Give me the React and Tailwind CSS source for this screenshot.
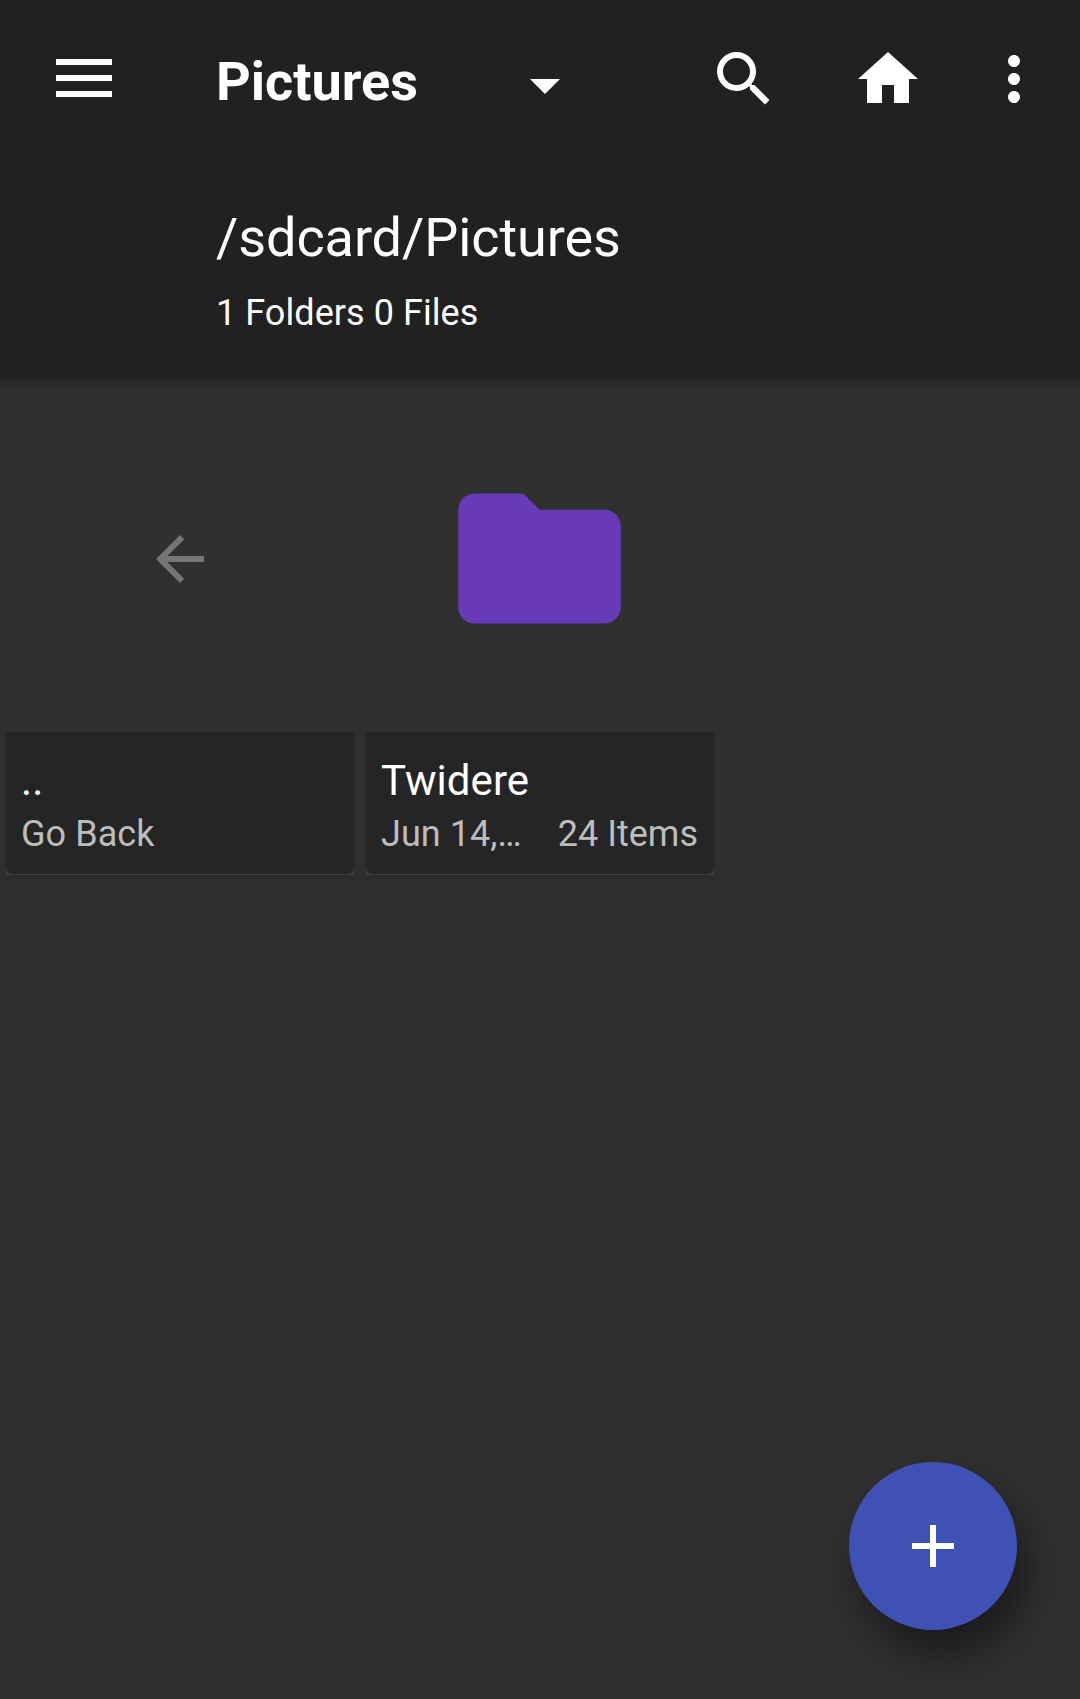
function Icon({ size = 72, children, className = "" }) {
  return (
    <svg viewBox="0 0 24 24" width={size} height={size} fill="currentColor" className={`block shrink-0 ${className}`}>
      {children}
    </svg>
  );
}

function Header() {
  return (
    <header className="relative z-10 h-[379px] bg-[#212121] shadow-[0_2px_14px_4px_rgba(0,0,0,0.22)]">
      <div className="flex h-[158px] items-center pr-[30px] pl-14">
        <button className="flex w-14 flex-col gap-2.5 self-start mt-[59px]" aria-label="Menu">
          <span className="h-1.5 bg-white" />
          <span className="h-1.5 bg-white" />
          <span className="h-1.5 bg-white" />
        </button>
        <button className="ml-26 flex w-[344px] items-center justify-between">
          <span className="mt-[5px] text-[54px] leading-[64px] font-bold">Pictures</span>
          <svg viewBox="0 0 30 15" width="30" height="15" fill="currentColor" className="mt-[15px]">
            <path d="M0 0h30L15 15z" />
          </svg>
        </button>
        <nav className="ml-auto flex items-center">
          <Icon>
            <path d="M15.5 14h-.79l-.28-.27A6.47 6.47 0 0 0 16 9.5 6.5 6.5 0 1 0 9.5 16c1.61 0 3.09-.59 4.23-1.57l.27.28v.79l5 4.99L20.49 19l-4.99-5zm-6 0C7.01 14 5 11.99 5 9.5S7.01 5 9.5 5 14 7.01 14 9.5 11.99 14 9.5 14z" />
          </Icon>
          <Icon className="ml-18">
            <path d="M10 20v-6h4v6h5v-8h3L12 3 2 12h3v8z" />
          </Icon>
          <Icon className="ml-[54px]">
            <path d="M12 8c1.100 0 2-.9 2-2s-.9-2-2-2-2 .9-2 2 .9 2 2 2zm0 2c-1.100 0-2 .9-2 2s.9 2 2 2 2-.9 2-2-.9-2-2-2zm0 6c-1.100 0-2 .9-2 2s.9 2 2 2 2-.9 2-2-.9-2-2-2z" />
          </Icon>
        </nav>
      </div>
      <div className="pt-12 pl-[216px]">
        <p className="text-[54px] leading-[64px] tracking-[-0.07px]">/sdcard/Pictures</p>
        <p className="mt-[21px] text-[36px] leading-[44px] tracking-[0.06px]">1 Folders 0 Files</p>
      </div>
    </header>
  );
}

function Tile({ icon, name, left, right }) {
  return (
    <article className="flex w-[348px] flex-col">
      <div className="flex h-[353px] items-center justify-center pt-[7px]">{icon}</div>
      <div className="h-[143px] bg-[#3f3f3f] shadow-[0_3px_6px_rgba(0,0,0,0.12)]">
        <div className="h-[142px] rounded-b-md bg-[#252525] pt-6 pr-4 pl-[15px]">
          <h2 className="text-[42px] leading-[50px] tracking-[0.06px]">{name}</h2>
          <div className="mt-1.5 flex justify-between text-[36px] leading-[44px] text-[#bdbdbd]">
            <span className="tracking-[0.06px]">{left}</span>
            <span>{right}</span>
          </div>
        </div>
      </div>
    </article>
  );
}

export default function App() {
  return (
    <div className="relative h-[1699px] w-[1080px] overflow-hidden bg-[#303030] font-['Roboto',sans-serif] text-white">
      <Header />
      <main className="flex gap-3 pl-1.5">
        <Tile
          icon={
            <Icon className="text-[#757575]">
              <path d="M20 11H7.830l5.590-5.590L12 4l-8 8 8 8 1.410-1.410L7.830 13H20v-2z" />
            </Icon>
          }
          name=".."
          left="Go Back"
        />
        <Tile
          icon={
            <Icon size={195} className="mr-px mb-px text-[#673ab7]">
              <path d="M10 4H4c-1.100 0-1.990.9-1.990 2L2 18c0 1.100.9 2 2 2h16c1.100 0 2-.9 2-2V8c0-1.100-.9-2-2-2h-8l-2-2z" />
            </Icon>
          }
          name="Twidere"
          left="Jun 14,…"
          right="24 Items"
        />
      </main>
      <button
        aria-label="Add"
        className="absolute right-[63px] bottom-[69px] flex size-42 items-center justify-center rounded-full bg-[#3f51b5] shadow-[10px_24px_42px_rgba(0,0,0,0.45)]"
      >
        <Icon>
          <path d="M19 13h-6v6h-2v-6H5v-2h6V5h2v6h6v2z" />
        </Icon>
      </button>
    </div>
  );
}
